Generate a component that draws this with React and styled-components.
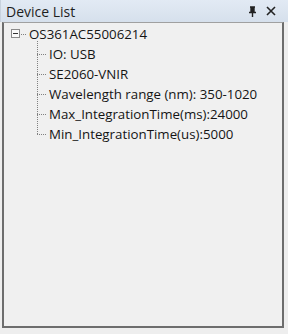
import React from 'react';
import styled, { createGlobalStyle } from 'styled-components';

const GlobalStyle = createGlobalStyle`
  html, body {
    margin: 0;
    padding: 0;
    background: #f0f0f0;
  }
  body {
    font-family: 'Open Sans', 'Noto Sans', sans-serif;
  }
`;

const Frame = styled.div`
  width: 288px;
  height: 334px;
  box-sizing: border-box;
  background: #eeeeee;
  display: flex;
  flex-direction: column;
  padding: 0 4px 6px 2px;
`;

const Header = styled.div`
  height: 22px;
  display: flex;
  align-items: center;
  justify-content: space-between;
  background: linear-gradient(#e2eaf4, #d6e0ec);
  margin: 0 -4px 0 -2px;
  padding: 0 12px 0 5px;
  border-left: 1px solid #c8d2de;
  box-sizing: border-box;
`;

const Title = styled.span`
  font-size: 14px;
  color: #1e1e1e;
`;

const Tools = styled.div`
  display: flex;
  align-items: center;
  gap: 9px;
`;

const Panel = styled.div`
  flex: 1;
  border: 2px solid #6d6d6d;
  border-top: 1px solid #a0a0a0;
  background: #f0f0f0;
  padding: 1px 0 0 4px;
`;

const Row = styled.div`
  position: relative;
  height: 20px;
  display: flex;
  align-items: center;
  padding-left: ${({ level }) => (level ? 41 : 21)}px;
  font-size: 13.3px;
  color: #141414;
  white-space: nowrap;
`;

const Expander = styled.span`
  position: absolute;
  left: 3px;
  top: 5px;
  width: 7px;
  height: 7px;
  border: 1px solid #8a8a8a;
  background: #fafafa;
  &::after {
    content: '';
    position: absolute;
    left: 1px;
    top: 3px;
    width: 5px;
    height: 1px;
    background: #333;
  }
`;

const HDots = styled.span`
  position: absolute;
  left: ${({ level }) => (level ? 29 : 11)}px;
  top: 10px;
  width: ${({ level }) => (level ? 9 : 7)}px;
  border-top: 1px dotted #808080;
`;

const VDots = styled.span`
  position: absolute;
  left: 29px;
  top: ${({ first }) => (first ? -3 : -10)}px;
  height: ${({ first }) => (first ? 13 : 20)}px;
  border-left: 1px dotted #808080;
`;

const PinIcon = () => (
  <svg width="9" height="11" viewBox="0 0 9 11">
    <path d="M2 1h5M3 1v5M6 1v5" stroke="#222" strokeWidth="1.4" fill="none" />
    <rect x="3" y="1" width="3" height="5" fill="#222" />
    <path d="M1 6.5h7M4.5 6.5v4.5" stroke="#222" strokeWidth="1.4" fill="none" />
  </svg>
);

const CloseIcon = () => (
  <svg width="10" height="10" viewBox="0 0 10 10">
    <path d="M1 1l8 8M9 1l-8 8" stroke="#222" strokeWidth="1.6" />
  </svg>
);

const items = [
  'IO: USB',
  'SE2060-VNIR',
  'Wavelength range (nm): 350-1020',
  'Max_IntegrationTime(ms):24000',
  'Min_IntegrationTime(us):5000',
];

export default function App() {
  return (
    <>
      <GlobalStyle />
      <Frame>
        <Header>
          <Title>Device List</Title>
          <Tools>
            <PinIcon />
            <CloseIcon />
          </Tools>
        </Header>
        <Panel>
          <Row level={0}>
            <HDots level={0} />
            <Expander />
            OS361AC55006214
          </Row>
          {items.map((text, i) => (
            <Row key={text} level={1}>
              <VDots first={i === 0} />
              <HDots level={1} />
              {text}
            </Row>
          ))}
        </Panel>
      </Frame>
    </>
  );
}
